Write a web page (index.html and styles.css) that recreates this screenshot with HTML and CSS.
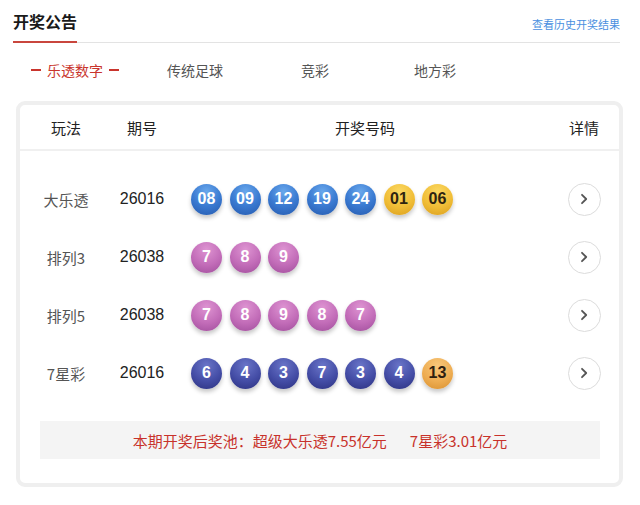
FILE: index.html
```html
<!DOCTYPE html>
<html lang="zh-CN">
<head>
<meta charset="utf-8">
<title>开奖公告</title>
<link rel="stylesheet" href="styles.css">
</head>
<body>
<div class="page">
  <div class="top">
    <div class="title">开奖公告</div>
    <a class="history">查看历史开奖结果</a>
  </div>
  <div class="tabs">
    <div class="tab active"><span class="dash"></span>乐透数字<span class="dash"></span></div>
    <div class="tab">传统足球</div>
    <div class="tab">竞彩</div>
    <div class="tab">地方彩</div>
  </div>
  <div class="card">
    <div class="thead">
      <div class="c1">玩法</div>
      <div class="c2">期号</div>
      <div class="c3">开奖号码</div>
      <div class="c4">详情</div>
    </div>
    <div class="tbody">
      <div class="row">
        <div class="c1 name">大乐透</div>
        <div class="c2 issue">26016</div>
        <div class="c3 balls">
          <span class="ball blue">08</span><span class="ball blue">09</span><span class="ball blue">12</span><span class="ball blue">19</span><span class="ball blue">24</span><span class="ball yellow">01</span><span class="ball yellow">06</span>
        </div>
        <div class="c4"><span class="more"><svg viewBox="0 0 12 12" width="12" height="12"><path d="M4 1.8 L8.2 6 L4 10.2" fill="none" stroke="#555" stroke-width="1.8" stroke-linecap="round" stroke-linejoin="round"/></svg></span></div>
      </div>
      <div class="row">
        <div class="c1 name">排列3</div>
        <div class="c2 issue">26038</div>
        <div class="c3 balls">
          <span class="ball pink">7</span><span class="ball pink">8</span><span class="ball pink">9</span>
        </div>
        <div class="c4"><span class="more"><svg viewBox="0 0 12 12" width="12" height="12"><path d="M4 1.8 L8.2 6 L4 10.2" fill="none" stroke="#555" stroke-width="1.8" stroke-linecap="round" stroke-linejoin="round"/></svg></span></div>
      </div>
      <div class="row">
        <div class="c1 name">排列5</div>
        <div class="c2 issue">26038</div>
        <div class="c3 balls">
          <span class="ball pink">7</span><span class="ball pink">8</span><span class="ball pink">9</span><span class="ball pink">8</span><span class="ball pink">7</span>
        </div>
        <div class="c4"><span class="more"><svg viewBox="0 0 12 12" width="12" height="12"><path d="M4 1.8 L8.2 6 L4 10.2" fill="none" stroke="#555" stroke-width="1.8" stroke-linecap="round" stroke-linejoin="round"/></svg></span></div>
      </div>
      <div class="row">
        <div class="c1 name">7星彩</div>
        <div class="c2 issue">26016</div>
        <div class="c3 balls">
          <span class="ball navy">6</span><span class="ball navy">4</span><span class="ball navy">3</span><span class="ball navy">7</span><span class="ball navy">3</span><span class="ball navy">4</span><span class="ball orange">13</span>
        </div>
        <div class="c4"><span class="more"><svg viewBox="0 0 12 12" width="12" height="12"><path d="M4 1.8 L8.2 6 L4 10.2" fill="none" stroke="#555" stroke-width="1.8" stroke-linecap="round" stroke-linejoin="round"/></svg></span></div>
      </div>
    </div>
    <div class="pool">本期开奖后奖池：超级大乐透7.55亿元<span class="sp"></span>7星彩3.01亿元</div>
  </div>
</div>
</body>
</html>
```
FILE: styles.css
```css
* { box-sizing: border-box; }
html, body { margin: 0; padding: 0; background: #fff; }
body {
  font-family: "Noto Sans CJK SC", "Noto Sans", sans-serif;
  color: #222;
  width: 640px;
  height: 505px;
  overflow: hidden;
}
.top {
  display: flex;
  justify-content: space-between;
  align-items: stretch;
  height: 43px;
  margin: 0 20px 0 13px;
  border-bottom: 1px solid #e3e3e3;
}
.title {
  display: flex;
  align-items: center;
  font-size: 16px;
  font-weight: 700;
  color: #1a1a1a;
  border-bottom: 2px solid #c9463d;
  margin-bottom: -1px;
  padding-top: 1px;
}
.history {
  align-self: center;
  font-size: 11px;
  color: #4a8fe0;
  padding-top: 6px;
}
.tabs {
  display: flex;
  height: 54px;
  margin-left: 15px;
  align-items: center;
}
.tab {
  width: 120px;
  display: flex;
  justify-content: center;
  align-items: center;
  font-size: 14px;
  color: #555;
}
.tab.active { color: #c9352d; }
.dash {
  display: inline-block;
  width: 10px;
  height: 2px;
  background: #c9352d;
  margin: 0 6px;
}
.card {
  margin: 4px 17px 0 16px;
  border: 4px solid #efefef;
  border-radius: 9px;
  height: 386px;
  background: #fff;
}
.thead {
  display: flex;
  align-items: center;
  height: 46px;
  border-bottom: 2px solid #f0f0f0;
  font-size: 15px;
  color: #222;
}
.c1 { width: 92px; text-align: center; }
.c2 { width: 60px; text-align: center; }
.c3 { width: 377px; }
.c4 { width: 70px; display: flex; justify-content: center; }
.thead .c3 { text-align: center; padding-left: 9px; }
.tbody { padding-top: 19px; }
.row {
  display: flex;
  align-items: center;
  height: 58px;
}
.name { font-size: 15px; color: #555; }
.issue { font-size: 15px; color: #222; font-family: "Liberation Sans", "Noto Sans", sans-serif; font-size: 16px; }
.balls {
  display: flex;
  gap: 7.5px;
  padding-left: 19px;
}
.ball {
  width: 31px;
  height: 31px;
  border-radius: 50%;
  display: flex;
  align-items: center;
  justify-content: center;
  font-family: "Liberation Sans", Roboto, sans-serif;
  font-size: 16px;
  font-weight: 700;
  color: #fff;
  box-shadow: 0 3px 4px rgba(0, 0, 0, 0.22);
}
.ball.blue { background: radial-gradient(circle at 50% 25%, #69a8ec 0%, #3b7bd2 50%, #2559ad 100%); }
.ball.yellow { background: radial-gradient(circle at 50% 25%, #fbd862 0%, #f0bd36 55%, #d99d1d 100%); color: #2e2410; }
.ball.pink { background: radial-gradient(circle at 50% 25%, #de94d2 0%, #c26cb8 55%, #9f4d9b 100%); }
.ball.navy { background: radial-gradient(circle at 50% 25%, #6a75c8 0%, #444da6 55%, #2b307e 100%); }
.ball.orange { background: radial-gradient(circle at 50% 25%, #f8c77a 0%, #eead52 55%, #d88f2e 100%); color: #2e2010; }
.more {
  width: 33px;
  height: 33px;
  border-radius: 50%;
  border: 1px solid #dcdcdc;
  display: flex;
  align-items: center;
  justify-content: center;
  background: #fff;
}
.pool {
  margin: 19px 19px 0 20px;
  height: 38px;
  background: #f4f4f4;
  display: flex;
  align-items: center;
  justify-content: center;
  font-size: 15px;
  color: #c8322b;
}
.sp { display: inline-block; width: 23px; }
```
